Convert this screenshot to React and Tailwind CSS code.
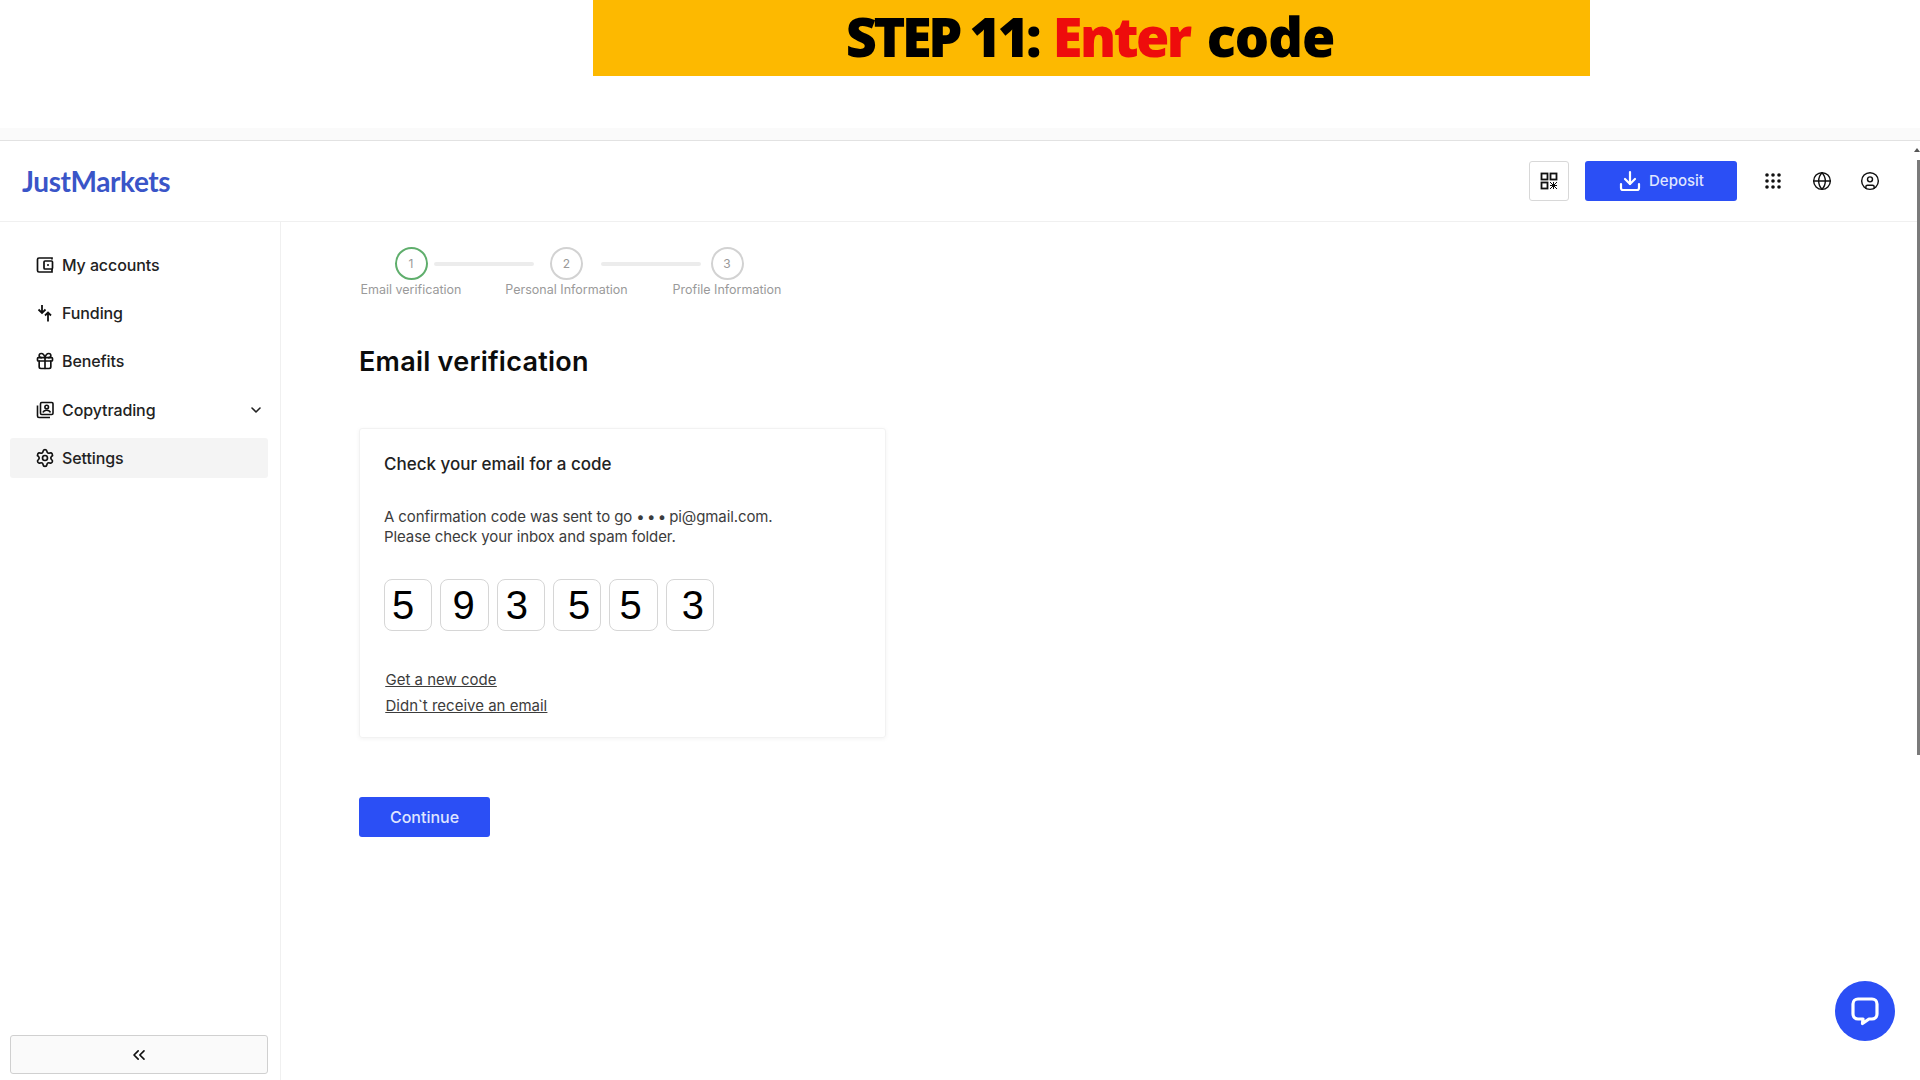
import { ChevronDown, ChevronsLeft, Download, Gift, Globe, Settings, CircleUser } from "lucide-react";

const font = "font-['Inter','Noto_Sans',sans-serif]";

function WalletIcon() {
  return (
    <svg width="18" height="18" viewBox="0 0 18 18" fill="none" stroke="#111" strokeWidth="1.7">
      <path d="M16 3.5V2H3a1.5 1.5 0 0 0-1.5 1.5v11A1.5 1.5 0 0 0 3 16h13v-3" />
      <rect x="8" y="5" width="8.5" height="8" rx="1" />
      <circle cx="12" cy="9" r="1" fill="#111" stroke="none" />
    </svg>
  );
}

function FundingIcon() {
  return (
    <svg width="18" height="18" viewBox="0 0 18 18" fill="none" stroke="#111" strokeWidth="1.8">
      <path d="M6 1v7.500M2.500 5.500 6 9l3.500-3.500" />
      <path d="M12 17.500V9M9 11.500 12 8.500l3 3" />
    </svg>
  );
}

function CopyIcon() {
  return (
    <svg width="18" height="18" viewBox="0 0 18 18" fill="none" stroke="#111" strokeWidth="1.6">
      <rect x="4.5" y="1.5" width="12.5" height="12" rx="1.2" />
      <path d="M1.5 4.5V15a1.5 1.5 0 0 0 1.5 1.5h11" />
      <circle cx="10.7" cy="6" r="1.8" />
      <path d="M7 11.500c.6-1.600 2-2.200 3.700-2.200s3.100.6 3.700 2.200" />
    </svg>
  );
}

function QrIcon() {
  return (
    <svg width="18" height="18" viewBox="0 0 18 18" fill="none" stroke="#111" strokeWidth="1.8">
      <rect x="1.500" y="1.500" width="6" height="6" />
      <rect x="10.500" y="1.500" width="6" height="6" />
      <rect x="1.500" y="10.500" width="6" height="6" />
      <path d="M10 10l7 7M17 10l-7 7M13.500 10v7M10 13.500h7" strokeWidth="1" />
    </svg>
  );
}

function GridIcon() {
  return (
    <svg width="16" height="16" viewBox="0 0 16 16" fill="#111">
      {[2, 8, 14].map((y) =>
        [2, 8, 14].map((x) => <circle key={`${x}-${y}`} cx={x} cy={y} r="1.800" />)
      )}
    </svg>
  );
}

function ChatIcon() {
  return (
    <svg width="30" height="30" viewBox="0 0 30 30" fill="none">
      <path
        d="M8 3h14a5 5 0 0 1 5 5v10a5 5 0 0 1-5 5h-3l-6.500 4.500.5-4.500H8a5 5 0 0 1-5-5V8a5 5 0 0 1 5-5z"
        stroke="#fff"
        strokeWidth="3.200"
        strokeLinejoin="round"
      />
    </svg>
  );
}

const menuItems = [
  { icon: <WalletIcon />, label: "My accounts", box: "h-[48px]" },
  { icon: <FundingIcon />, label: "Funding", box: "h-[48px]" },
  { icon: <Gift size={20} strokeWidth={2} color="#111" />, label: "Benefits", box: "h-[48px]" },
  { icon: <CopyIcon />, label: "Copytrading", box: "h-[50px] mb-[3px]", arrow: true },
];

const steps = [
  { n: 1, label: "Email verification", ring: "border-[#5fae6c]", w: "w-[104px]" },
  { n: 2, label: "Personal Information", ring: "border-[#d2d2d2]", w: "w-[125px]" },
  { n: 3, label: "Profile Information", ring: "border-[#d2d2d2]", w: "w-[110px]" },
];

const digits = [
  { d: "5", pad: "pr-[10px]" },
  { d: "9", pad: "pr-[2px]" },
  { d: "3", pad: "pr-[8px]" },
  { d: "5", pad: "pl-[4px]" },
  { d: "5", pad: "pr-[6px]" },
  { d: "3", pad: "pl-[6px]" },
];

export default function App() {
  return (
    <div className={`relative flex h-[1080px] w-[1920px] flex-col overflow-hidden bg-white ${font}`}>
      {/* Banner */}
      <div className="flex h-[128px] shrink-0 items-start justify-start pl-[593px]">
        <div className="flex h-[76px] w-[997px] items-center justify-center bg-[#fdb900] pb-[5px] pr-[3px] text-[54px] font-extrabold leading-[60px] text-black font-['Open_Sans',sans-serif]">
          <span className="tracking-[-3.400px]">STEP 11:&nbsp;</span>
          <span className="ml-[4px] tracking-[-2.500px] text-[#ee0c0c]">Enter</span>
          <span className="ml-[4px] tracking-[-1px]">&nbsp;code</span>
        </div>
      </div>
      <div className="h-[12px] shrink-0 bg-[#fafafa]" />

      {/* Header */}
      <header className="flex h-[82px] shrink-0 items-center justify-between border-y border-t-[#e2e2e2] border-b-[#f0f0f0] pl-[22px] pr-[40px]">
        <span className="text-[28px] font-bold tracking-[-0.4px] text-[#3a55c8] font-['Lato',sans-serif]">JustMarkets</span>
        <div className="flex items-center">
          <div className="flex h-[40px] w-[40px] items-center justify-center rounded-[3px] border border-[#d8d8d8]">
            <QrIcon />
          </div>
          <button className="ml-[16px] flex h-[40px] w-[152px] items-center justify-center gap-[7px] rounded-[3px] bg-[#2b4ff5] text-[15px] font-medium text-[#dfe5ff]">
            <Download size={24} strokeWidth={2.2} color="#fff" />
            Deposit
          </button>
          <div className="ml-[28px] flex w-[16px] justify-center"><GridIcon /></div>
          <div className="ml-[31px]"><Globe size={20} strokeWidth={1.7} color="#111" /></div>
          <div className="ml-[28px]"><CircleUser size={20} strokeWidth={1.7} color="#111" /></div>
        </div>
      </header>

      <div className="flex min-h-0 flex-1">
        {/* Sidebar */}
        <aside className="flex w-[281px] shrink-0 flex-col border-r border-[#f0f0f0] pb-[6px] pl-[10px] pr-[12px] pt-[19px]">
          {menuItems.map((item) => (
            <div key={item.label} className={`flex items-center gap-[7px] pl-[24px] pr-[4px] ${item.box}`}>
              <span className="flex w-[21px] justify-center">{item.icon}</span>
              <span className="flex-1 text-[16px] font-medium tracking-[-0.1px] text-[#222]">{item.label}</span>
              {item.arrow && <ChevronDown size={16} strokeWidth={2.4} color="#222" />}
            </div>
          ))}
          <div className="flex h-[40px] items-center gap-[7px] rounded-[3px] bg-[#f4f4f4] pl-[24px]">
            <span className="flex w-[21px] justify-center"><Settings size={20} strokeWidth={2} color="#111" /></span>
            <span className="text-[16px] font-medium tracking-[-0.1px] text-[#222]">Settings</span>
          </div>
          <button className="mt-auto flex h-[39px] items-center justify-center rounded-[3px] border border-[#d0d0d0] bg-[#fafafa]">
            <ChevronsLeft size={20} strokeWidth={2} color="#111" />
          </button>
        </aside>

        {/* Main */}
        <main className="flex min-w-0 flex-1 flex-col pl-[78px] pt-[25px]">
          <div className="flex items-start">
            {steps.map((s, i) => (
              <div key={s.n} className="flex items-start">
                <div className={`flex flex-col items-center ${s.w}`}>
                  <div className={`flex h-[33px] w-[33px] items-center justify-center rounded-full border-2 text-[12px] text-[#999] ${s.ring}`}>
                    {s.n}
                  </div>
                  <span className="mt-[1px] whitespace-nowrap text-[12.500px] leading-[18px] text-[#9a9a9a]">{s.label}</span>
                </div>
                {i < 2 && (
                  <div className={`mt-[15px] h-[4px] w-[100px] rounded-full bg-[#ececec] ${i === 0 ? "-mx-[29.500px]" : "-mx-[28.500px]"}`} />
                )}
              </div>
            ))}
          </div>

          <h1 className="mt-[46px] text-[27px] font-semibold leading-[34px] tracking-[0.25px] text-[#0c0c0c]">Email verification</h1>

          <section className="mt-[49px] h-[310px] w-[527px] rounded-[3px] border border-[#f2f2f2] pl-[24px] pt-[23px] shadow-[0_1px_4px_rgba(0,0,0,0.05)]">
            <h2 className="text-[17px] font-medium leading-[24px] text-[#222]">Check your email for a code</h2>
            <p className="mt-[31px] text-[15px] leading-[20px] tracking-[-0.1px] text-[#3c3c3c]">
              A confirmation code was sent to go <span className="tracking-[-1px]">• • •</span> pi@gmail.com.
              <br />
              Please check your inbox and spam folder.
            </p>
            <div className="mt-[32px] flex gap-[8px]">
              {digits.map((c, i) => (
                <div
                  key={i}
                  className={`flex h-[52px] w-[48.350px] items-center justify-center rounded-[8px] border border-[#d6d6d6] text-[40px] text-black font-['Liberation_Sans',Arial,sans-serif] ${c.pad}`}
                >
                  {c.d}
                </div>
              ))}
            </div>
            <div className="mt-[40px] flex flex-col gap-[8px] pl-[1.500px] text-[15px] leading-[18px] text-[#3c3c3c] underline">
              <a>Get a new code</a>
              <a>Didn`t receive an email</a>
            </div>
          </section>

          <button className="mt-[59px] flex h-[40px] w-[131px] items-center justify-center rounded-[3px] bg-[#2b4ff5] text-[16px] font-medium text-[#dfe5ff]">
            Continue
          </button>
        </main>
      </div>

      {/* Chat bubble */}
      <div className="absolute left-[1835px] top-[981px] flex h-[60px] w-[60px] items-center justify-center rounded-full bg-[#2b4ff5]">
        <ChatIcon />
      </div>

      {/* Scrollbar */}
      <div className="absolute right-0 top-[148px] h-0 w-0 border-x-[3px] border-b-[4px] border-x-transparent border-b-[#555]" />
      <div className="absolute right-0 top-[160px] h-[595px] w-[3px] bg-[#7a7a7a]" />
    </div>
  );
}
